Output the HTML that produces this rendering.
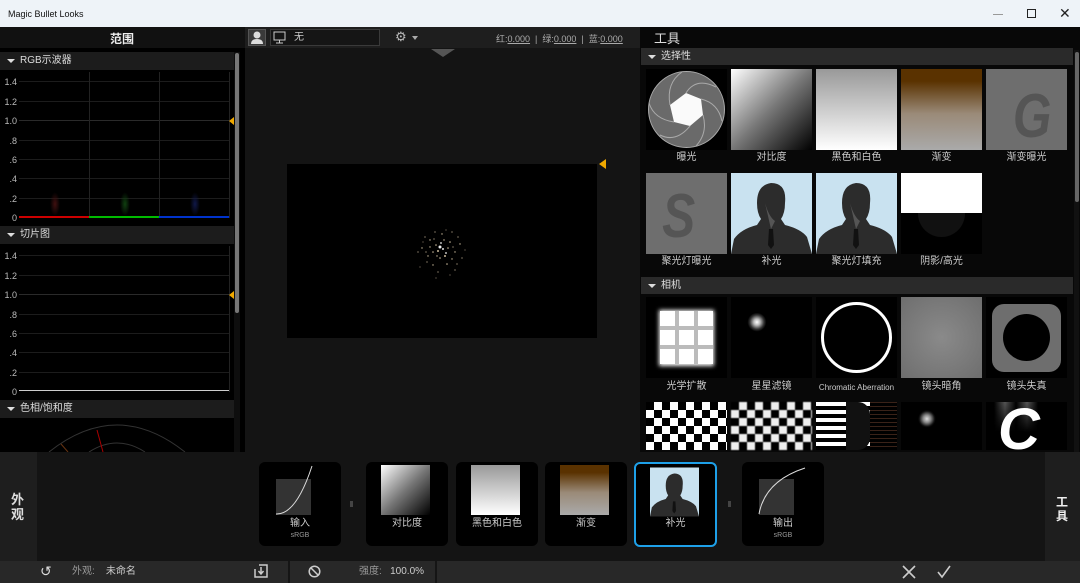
<!DOCTYPE html>
<html style="width:1080px;height:583px;overflow:hidden"><head><meta charset="utf-8"><style>
*{margin:0;padding:0;box-sizing:border-box}
body{width:1080px;height:583px;overflow:hidden;background:#0a0a0a;font-family:"Liberation Sans","Noto Sans CJK SC",sans-serif;color:#ccc;position:relative;font-size:10px;line-height:12px}
.a{position:absolute}
.t{position:absolute;white-space:nowrap}
.hdr{position:absolute;background:#1c1c1c;color:#ddd;font-size:10px;line-height:18px;padding-left:20px}
.hdr:before{content:"";position:absolute;left:7px;top:7px;border-left:4px solid transparent;border-right:4px solid transparent;border-top:4px solid #ddd}
.yl{position:absolute;left:0;width:17px;text-align:right;font-size:9px;color:#bbb}
.gl{position:absolute;left:19px;width:210px;height:1px;background:#1c1c1c}
.tile{position:absolute;width:81px;height:81px;overflow:hidden}
.lab{position:absolute;width:81px;text-align:center;font-size:10px;color:#ccc}
.card{position:absolute;top:462px;width:82px;height:84px;background:#000;border-radius:6px}
.card .img{position:absolute;left:16px;top:3px;width:50px;height:50px}
.card .cl{position:absolute;top:56px;width:100%;text-align:center;font-size:10px;line-height:12px;color:#ccc}
.card .cs{position:absolute;top:70px;width:100%;text-align:center;font-size:7px;line-height:8px;color:#999}
</style></head><body>
<div class="a" style="left:0;top:0;width:1080px;height:27px;background:#eef3f8"></div>
<div class="t" style="left:8px;top:8px;font-size:9px;color:#111">Magic Bullet Looks</div>
<div class="a" style="left:993px;top:14px;width:10px;height:1px;background:#999"></div>
<div class="a" style="left:1027px;top:9px;width:9px;height:9px;border:1px solid #222"></div>
<div class="t" style="left:1059px;top:7px;font-size:14px;color:#222">✕</div>

<div class="a" style="left:0;top:27px;width:245px;height:425px;background:#000"></div>
<div class="a" style="left:0;top:27px;width:245px;height:21px;background:#111"></div>
<div class="t" style="left:110px;top:32px;font-size:12px;line-height:14px;font-weight:bold;color:#eee">范围</div>
<div class="a" style="left:234px;top:52px;width:6px;height:400px;background:#0e0e0e"></div>
<div class="a" style="left:235px;top:53px;width:4px;height:260px;background:#777;border-radius:2px"></div>

<div class="hdr" style="left:0;top:52px;width:234px">RGB示波器</div>
<div class="gl" style="top:81px"></div><div class="gl" style="top:101px"></div><div class="gl" style="top:120px;background:#2a2a2a"></div><div class="gl" style="top:140px"></div><div class="gl" style="top:159px"></div><div class="gl" style="top:178px"></div><div class="gl" style="top:198px"></div>
<div class="a" style="left:89px;top:72px;width:1px;height:146px;background:#222"></div>
<div class="a" style="left:159px;top:72px;width:1px;height:146px;background:#222"></div>
<div class="a" style="left:229px;top:72px;width:1px;height:146px;background:#222"></div>
<div class="a" style="left:19px;top:216px;width:70px;height:2px;background:#c00"></div>
<div class="a" style="left:89px;top:216px;width:70px;height:2px;background:#0b0"></div>
<div class="a" style="left:159px;top:216px;width:70px;height:2px;background:#03c"></div>
<div class="a" style="left:50px;top:192px;width:10px;height:24px;background:radial-gradient(#401010,transparent 70%)"></div>
<div class="a" style="left:120px;top:192px;width:10px;height:24px;background:radial-gradient(#104010,transparent 70%)"></div>
<div class="a" style="left:190px;top:192px;width:10px;height:24px;background:radial-gradient(#101848,transparent 70%)"></div>
<div class="yl" style="top:76px">1.4</div><div class="yl" style="top:96px">1.2</div><div class="yl" style="top:115px">1.0</div><div class="yl" style="top:135px">.8</div><div class="yl" style="top:154px">.6</div><div class="yl" style="top:173px">.4</div><div class="yl" style="top:193px">.2</div><div class="yl" style="top:212px">0</div>
<div class="a" style="left:229px;top:117px;border-top:4px solid transparent;border-bottom:4px solid transparent;border-right:5px solid #f0a800"></div>

<div class="hdr" style="left:0;top:226px;width:234px">切片图</div>
<div class="gl" style="top:255px"></div><div class="gl" style="top:275px"></div><div class="gl" style="top:294px;background:#2a2a2a"></div><div class="gl" style="top:314px"></div><div class="gl" style="top:333px"></div><div class="gl" style="top:352px"></div><div class="gl" style="top:372px"></div>
<div class="a" style="left:229px;top:246px;width:1px;height:146px;background:#222"></div>
<div class="a" style="left:19px;top:390px;width:210px;height:1px;background:#ccc"></div>
<div class="yl" style="top:250px">1.4</div><div class="yl" style="top:270px">1.2</div><div class="yl" style="top:289px">1.0</div><div class="yl" style="top:309px">.8</div><div class="yl" style="top:328px">.6</div><div class="yl" style="top:347px">.4</div><div class="yl" style="top:367px">.2</div><div class="yl" style="top:386px">0</div>
<div class="a" style="left:229px;top:291px;border-top:4px solid transparent;border-bottom:4px solid transparent;border-right:5px solid #f0a800"></div>

<div class="hdr" style="left:0;top:400px;width:234px">色相/饱和度</div>
<svg class="a" style="left:0;top:418px" width="234" height="34" viewBox="0 0 234 34"><path d="M49 34 Q117 -20 185 34" fill="none" stroke="#333"/><path d="M89 34 Q117 16 145 34" fill="none" stroke="#333"/><line x1="97" y1="12" x2="103" y2="34" stroke="#a00"/><line x1="61" y1="26" x2="68" y2="34" stroke="#631"/></svg>

<div class="a" style="left:245px;top:27px;width:395px;height:425px;background:#141414"></div>
<div class="a" style="left:245px;top:27px;width:395px;height:21px;background:#1e1e1e"></div>
<div class="a" style="left:248px;top:29px;width:18px;height:17px;background:#3a3a3a;border:1px solid #555"></div>
<svg class="a" style="left:250px;top:30px" width="14" height="15"><circle cx="7" cy="5" r="3.5" fill="#ddd"/><path d="M1 14 Q1 9 7 9 Q13 9 13 14Z" fill="#ddd"/></svg>
<div class="a" style="left:270px;top:29px;width:110px;height:17px;background:#151515;border:1px solid #3a3a3a"></div>
<svg class="a" style="left:273px;top:31px" width="14" height="13"><rect x="1" y="1" width="11" height="8" fill="none" stroke="#ccc"/><line x1="6.5" y1="9" x2="6.5" y2="12" stroke="#ccc"/><line x1="3" y1="12" x2="10" y2="12" stroke="#ccc"/></svg>
<div class="t" style="left:294px;top:32px;font-size:10px;color:#ccc">无</div>
<div class="t" style="left:395px;top:29px;font-size:13px;line-height:16px;color:#bbb">⚙</div>
<div class="a" style="left:412px;top:36px;border-left:3px solid transparent;border-right:3px solid transparent;border-top:4px solid #aaa"></div>
<div class="t" style="left:496px;top:33px;font-size:9px;color:#aaa">红:<u>0.000</u> &nbsp;|&nbsp; 绿:<u>0.000</u> &nbsp;|&nbsp; 蓝:<u>0.000</u></div>
<div class="a" style="left:431px;top:49px;border-left:12px solid transparent;border-right:12px solid transparent;border-top:8px solid #555"></div>
<div class="a" style="left:287px;top:164px;width:310px;height:174px;background:#000"></div>
<svg class="a" style="left:400px;top:212px" width="85" height="80" fill="#c8b89a">
<circle cx="40" cy="35" r="1.5" fill="#eee"/><circle cx="43" cy="37" r="1" fill="#ddd"/><circle cx="38" cy="39" r="1"/><circle cx="45" cy="44" r="1"/><circle cx="36" cy="33" r="0.8"/><circle cx="50" cy="30" r="0.8"/><circle cx="30" cy="28" r="0.7"/><circle cx="55" cy="40" r="0.7"/><circle cx="28" cy="44" r="0.7"/><circle cx="47" cy="52" r="0.8"/><circle cx="33" cy="53" r="0.7"/><circle cx="22" cy="36" r="0.7"/><circle cx="60" cy="32" r="0.7"/><circle cx="42" cy="22" r="0.7"/><circle cx="35" cy="20" r="0.6"/><circle cx="52" cy="20" r="0.6"/><circle cx="25" cy="25" r="0.6"/><circle cx="62" cy="46" r="0.6"/><circle cx="18" cy="40" r="0.6"/><circle cx="38" cy="60" r="0.6"/><circle cx="55" cy="58" r="0.6"/><circle cx="44" cy="28" r="0.7"/><circle cx="48" cy="36" r="0.8"/><circle cx="33" cy="40" r="0.8"/><circle cx="40" cy="46" r="0.8"/><circle cx="52" cy="47" r="0.7"/><circle cx="27" cy="50" r="0.6"/><circle cx="58" cy="25" r="0.6"/><circle cx="30" cy="35" r="0.7"/><circle cx="46" cy="41" r="0.9" fill="#eee"/><circle cx="41" cy="31" r="0.9" fill="#eee"/><circle cx="37" cy="44" r="0.7"/><circle cx="57" cy="52" r="0.6"/><circle cx="23" cy="30" r="0.5"/><circle cx="20" cy="55" r="0.5"/><circle cx="65" cy="38" r="0.5"/><circle cx="46" cy="18" r="0.5"/><circle cx="36" cy="66" r="0.5"/><circle cx="50" cy="63" r="0.5"/><circle cx="34" cy="27" r="0.6"/><circle cx="53" cy="35" r="0.6"/><circle cx="26" cy="40" r="0.6"/>
</svg>
<div class="a" style="left:599px;top:159px;border-top:5px solid transparent;border-bottom:5px solid transparent;border-right:7px solid #f0a800"></div>

<div class="a" style="left:640px;top:27px;width:440px;height:425px;background:#080808"></div>
<div class="t" style="left:654px;top:31px;font-size:13px;line-height:16px;color:#ddd">工具</div>
<div class="a" style="left:1074px;top:50px;width:5px;height:402px;background:#111"></div>
<div class="a" style="left:1075px;top:52px;width:4px;height:150px;background:#666;border-radius:2px"></div>
<div class="hdr" style="left:641px;top:48px;width:432px;height:17px;line-height:17px;background:#2a2a2a">选择性</div>

<svg class="tile" style="left:646px;top:69px;background:#000" viewBox="0 0 81 81"><circle cx="40.5" cy="40.5" r="38" fill="#6a6a6a" stroke="#aaa"/><polygon points="40,24 55,30 57,46 44,57 28,53 24,36" fill="#fafafa"/><g fill="none" stroke="#aaa" stroke-width="1"><path d="M40 24 Q50 8 70 18"/><path d="M55 30 Q72 34 76 52"/><path d="M57 46 Q62 64 50 77"/><path d="M44 57 Q30 74 14 66"/><path d="M28 53 Q8 50 3 34"/><path d="M24 36 Q20 14 36 3"/></g></svg>
<div class="tile" style="left:731px;top:69px;background:linear-gradient(135deg,#fff,#777 50%,#000)"></div>
<div class="tile" style="left:816px;top:69px;background:linear-gradient(#999,#fff)"></div>
<div class="tile" style="left:901px;top:69px;background:linear-gradient(#5a3200 0%,#5a3200 15%,#9a8a78 55%,#aaa 100%)"></div>
<div class="tile" style="left:986px;top:69px;background:#6e6e6e"><div class="t" style="left:22px;top:16px;font-size:62px;line-height:64px;font-weight:bold;font-style:italic;color:#555;transform:scaleX(.8)">G</div></div>
<div class="lab" style="left:646px;top:152px">曝光</div><div class="lab" style="left:731px;top:152px">对比度</div><div class="lab" style="left:816px;top:152px">黑色和白色</div><div class="lab" style="left:901px;top:152px">渐变</div><div class="lab" style="left:986px;top:152px">渐变曝光</div>

<div class="tile" style="left:646px;top:173px;background:#6e6e6e"><div class="t" style="left:12px;top:12px;font-size:62px;line-height:64px;font-weight:bold;font-style:italic;color:#555;transform:scaleX(.8)">S</div></div>
<svg class="tile" style="left:731px;top:173px;background:#c9e2f0" viewBox="0 0 81 81"><path d="M0 81 L3 66 Q10 56 26 52 L30 46 Q26 40 26 30 Q26 12 40 10 Q56 10 54 30 Q54 40 50 46 L54 52 Q70 56 76 64 L81 81Z" fill="#2c2c2c"/><path d="M34 30 Q38 44 44 48 L40 56Z" fill="#555"/><path d="M38 56 L42 56 L43 72 L40 76 L37 72Z" fill="#111"/></svg>
<svg class="tile" style="left:816px;top:173px;background:#c9e2f0" viewBox="0 0 81 81"><path d="M0 81 L3 66 Q10 56 26 52 L30 46 Q26 40 26 30 Q26 12 40 10 Q56 10 54 30 Q54 40 50 46 L54 52 Q70 56 76 64 L81 81Z" fill="#2c2c2c"/><path d="M34 30 Q38 44 44 48 L40 56Z" fill="#555"/><path d="M38 56 L42 56 L43 72 L40 76 L37 72Z" fill="#111"/></svg>
<div class="tile" style="left:901px;top:173px;background:#000"><div class="a" style="left:0;top:0;width:81px;height:40px;background:#fff"></div><div class="a" style="left:17px;top:17px;width:47px;height:47px;border-radius:50%;background:#111;clip-path:inset(23px 0 0 0)"></div></div>
<div class="lab" style="left:646px;top:256px">聚光灯曝光</div><div class="lab" style="left:731px;top:256px">补光</div><div class="lab" style="left:816px;top:256px">聚光灯填充</div><div class="lab" style="left:901px;top:256px">阴影/高光</div>

<div class="hdr" style="left:641px;top:277px;width:432px;height:17px;line-height:17px;background:#2a2a2a">相机</div>
<svg class="tile" style="left:646px;top:297px;background:#000" viewBox="0 0 81 81"><defs><filter id="b"><feGaussianBlur stdDeviation="2"/></filter></defs><g fill="#fff" filter="url(#b)"><rect x="13" y="13" width="55" height="56"/></g><g fill="#fff"><rect x="14" y="14" width="15" height="15"/><rect x="33" y="14" width="15" height="15"/><rect x="52" y="14" width="15" height="15"/><rect x="14" y="33" width="15" height="15"/><rect x="33" y="33" width="15" height="15"/><rect x="52" y="33" width="15" height="15"/><rect x="14" y="52" width="15" height="15"/><rect x="33" y="52" width="15" height="15"/><rect x="52" y="52" width="15" height="15"/></g><g stroke="#bbb" stroke-width="4"><line x1="31" y1="14" x2="31" y2="67"/><line x1="50" y1="14" x2="50" y2="67"/><line x1="14" y1="31" x2="67" y2="31"/><line x1="14" y1="50" x2="67" y2="50"/></g></svg>
<div class="tile" style="left:731px;top:297px;background:radial-gradient(circle at 32% 31%,#fff 0,#bbb 4%,#333 9%,#000 12%)"></div>
<svg class="tile" style="left:816px;top:297px;background:#000" viewBox="0 0 81 81"><circle cx="40.5" cy="40.5" r="34" fill="none" stroke="#fff" stroke-width="3"/></svg>
<div class="tile" style="left:901px;top:297px;background:radial-gradient(#8a8a8a,#6e6e6e)"></div>
<div class="tile" style="left:986px;top:297px;background:#000"><div class="a" style="left:6px;top:7px;width:69px;height:68px;background:#6e6e6e;border-radius:12px"></div><div class="a" style="left:17px;top:17px;width:47px;height:47px;border-radius:50%;background:#000"></div></div>
<div class="lab" style="left:646px;top:381px">光学扩散</div><div class="lab" style="left:731px;top:381px">星星滤镜</div><div class="lab" style="left:816px;top:382px;font-size:8px">Chromatic Aberration</div><div class="lab" style="left:901px;top:381px">镜头暗角</div><div class="lab" style="left:986px;top:381px">镜头失真</div>

<div class="tile" style="left:646px;top:402px;height:48px;background:repeating-conic-gradient(#fff 0 25%,#000 0 50%) 0 0/16px 16px"></div>
<div class="tile" style="left:731px;top:402px;height:48px;background:repeating-conic-gradient(#eee 0 25%,#000 0 50%) 0 0/16px 16px;filter:blur(.6px)"></div>
<div class="tile" style="left:816px;top:402px;height:48px;background:repeating-linear-gradient(#fff 0 4px,#000 4px 8px);"><div class="a" style="left:30px;top:0;width:24px;height:48px;background:#111;border-radius:0 12px 12px 0"></div><div class="a" style="left:54px;top:0;width:27px;height:48px;background:repeating-linear-gradient(#3a2218 0 1px,#000 1px 4px)"></div></div>
<div class="tile" style="left:901px;top:402px;height:48px;background:radial-gradient(circle at 32% 35%,#ddd 0,#888 6%,#111 12%,#000 14%)"></div>
<div class="tile" style="left:986px;top:402px;height:48px;background:#000"><div class="a" style="left:8px;top:0;width:44px;height:30px;background:linear-gradient(90deg,#000,#555,#000,#555,#000);-webkit-mask:linear-gradient(#000,transparent)"></div><div class="t" style="left:12px;top:8px;font-size:58px;line-height:40px;font-weight:bold;font-style:italic;color:#fff">C</div></div>

<div class="a" style="left:0;top:452px;width:1080px;height:109px;background:#141414"></div>
<div class="a" style="left:0;top:452px;width:37px;height:109px;background:#1e1e1e"></div>
<div class="t" style="left:11px;top:492px;font-size:13px;font-weight:bold;color:#ddd;line-height:15px;white-space:normal;width:15px">外观</div>
<div class="a" style="left:1045px;top:452px;width:35px;height:109px;background:#1e1e1e"></div>
<div class="t" style="left:1056px;top:495px;font-size:12px;font-weight:bold;color:#eee;line-height:14px;white-space:normal;width:13px">工具</div>

<div class="card" style="left:259px"><svg class="img" style="left:15px;top:3px" viewBox="0 0 50 50"><rect x="2" y="14" width="35" height="36" fill="#333"/><path d="M2 49 Q22 50 38 1" stroke="#ddd" fill="none" stroke-width="1"/></svg><div class="cl">输入</div><div class="cs">sRGB</div></div>
<div class="a" style="left:350px;top:501px;width:3px;height:6px;background:#444"></div>
<div class="card" style="left:366px"><div class="img" style="left:15px;top:3px;width:49px;height:50px;background:linear-gradient(135deg,#fff,#777 50%,#000)"></div><div class="cl">对比度</div></div>
<div class="card" style="left:456px"><div class="img" style="left:15px;top:3px;width:49px;height:50px;background:linear-gradient(#999,#fff)"></div><div class="cl">黑色和白色</div></div>
<div class="card" style="left:545px"><div class="img" style="left:15px;top:3px;width:49px;height:50px;background:linear-gradient(#5a3200 0%,#5a3200 15%,#9a8a78 55%,#aaa 100%)"></div><div class="cl">渐变</div></div>
<div class="card" style="left:634px;width:83px;height:85px;border:2px solid #1ea0e8"><svg class="img" style="left:14px;top:3px;width:49px;height:50px" viewBox="0 0 81 81"><rect width="81" height="81" fill="#c9e2f0"/><path d="M0 81 L3 66 Q10 56 26 52 L30 46 Q26 40 26 30 Q26 12 40 10 Q56 10 54 30 Q54 40 50 46 L54 52 Q70 56 76 64 L81 81Z" fill="#2c2c2c"/><path d="M38 56 L42 56 L43 72 L40 76 L37 72Z" fill="#111"/></svg><div class="cl" style="top:54px">补光</div></div>
<div class="a" style="left:728px;top:501px;width:3px;height:6px;background:#444"></div>
<div class="card" style="left:742px"><svg class="img" style="left:15px;top:3px" viewBox="0 0 50 50"><rect x="2" y="14" width="35" height="36" fill="#333"/><path d="M2 49 Q8 16 48 3" stroke="#ddd" fill="none" stroke-width="1"/></svg><div class="cl">输出</div><div class="cs">sRGB</div></div>

<div class="a" style="left:0;top:561px;width:1080px;height:22px;background:#282828"></div>
<div class="a" style="left:288px;top:561px;width:2px;height:22px;background:#151515"></div>
<div class="a" style="left:435px;top:561px;width:2px;height:22px;background:#151515"></div>
<div class="t" style="left:40px;top:563px;font-size:14px;line-height:16px;color:#ddd">↺</div>
<div class="t" style="left:72px;top:566px;font-size:10px;color:#999">外观:&nbsp;&nbsp;&nbsp;&nbsp;<span style="color:#ccc">未命名</span></div>
<svg class="a" style="left:254px;top:564px" width="14" height="14"><path d="M5 1 H13 V13 H1 V5" fill="none" stroke="#ccc" stroke-width="1.5"/><path d="M7 3 V9 M4.5 7 L7 10 L9.5 7" fill="none" stroke="#ccc" stroke-width="1.5"/></svg>
<svg class="a" style="left:308px;top:565px" width="13" height="13"><circle cx="6.5" cy="6.5" r="5.3" fill="none" stroke="#ccc" stroke-width="1.5"/><line x1="3" y1="3" x2="10" y2="10" stroke="#ccc" stroke-width="1.5"/></svg>
<div class="t" style="left:359px;top:566px;font-size:10px;color:#999">强度:&nbsp;&nbsp;&nbsp;<span style="color:#ccc">100.0%</span></div>
<svg class="a" style="left:902px;top:565px" width="14" height="14"><path d="M1 1 L13 13 M13 1 L1 13" stroke="#ccc" stroke-width="1.6"/></svg>
<svg class="a" style="left:937px;top:565px" width="14" height="14"><path d="M1 7 L5 12 L13 1" stroke="#ccc" stroke-width="1.6" fill="none"/></svg>
</body></html>
